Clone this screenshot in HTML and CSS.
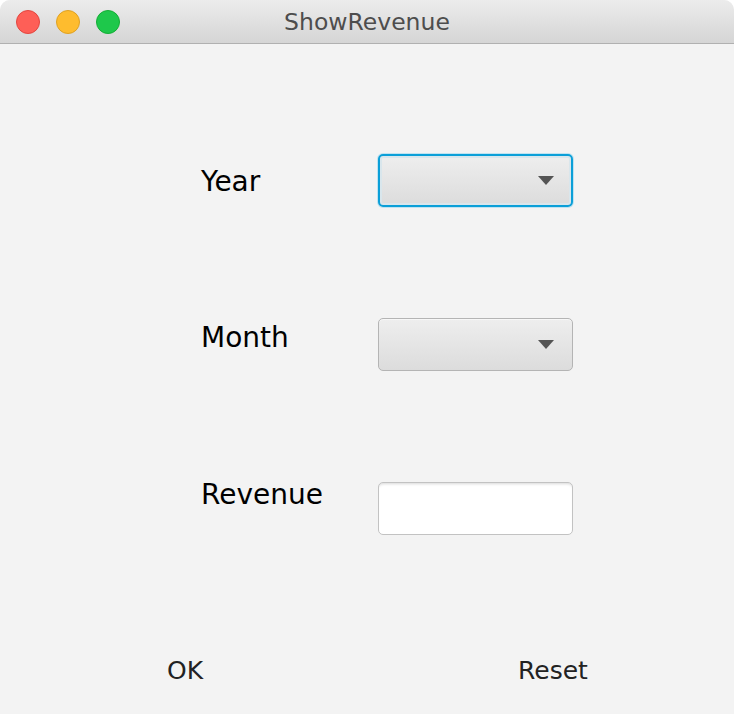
FILE: index.html
```html
<!DOCTYPE html>
<html>
<head>
<meta charset="utf-8">
<link rel="stylesheet" href="styles.css">
</head>
<body>
<div class="window">
  <div class="titlebar">
    <div class="lights">
      <span class="light red"></span>
      <span class="light yellow"></span>
      <span class="light green"></span>
    </div>
    <div class="title">ShowRevenue</div>
  </div>
  <div class="content">
    <div class="form">
      <div class="labels">
        <div class="label">Year</div>
        <div class="label">Month</div>
        <div class="label">Revenue</div>
      </div>
      <div class="controls">
        <div class="combo focused"><span class="arrow"></span></div>
        <div class="combo"><span class="arrow"></span></div>
        <div class="field"></div>
      </div>
    </div>
    <div class="buttons">
      <button class="btn ok">OK</button>
      <button class="btn reset">Reset</button>
    </div>
  </div>
</div>
</body>
</html>
```
FILE: styles.css
```css
html, body {
  margin: 0;
  padding: 0;
  background: #ffffff;
}
.window {
  width: 734px;
  height: 714px;
  display: flex;
  flex-direction: column;
  background: #f3f3f3;
  border-radius: 10px 10px 0 0;
  overflow: hidden;
  font-family: "DejaVu Sans", "Liberation Sans", sans-serif;
}
.titlebar {
  position: relative;
  height: 43px;
  flex: none;
  background: linear-gradient(#ececec, #d5d5d5);
  border-bottom: 1px solid #b0b0b0;
  display: flex;
  align-items: center;
  justify-content: center;
}
.lights {
  position: absolute;
  left: 16px;
  top: 10px;
  display: flex;
  gap: 16px;
}
.light {
  width: 22px;
  height: 22px;
  border-radius: 50%;
  box-sizing: content-box;
  display: block;
}
.red { background: #fe5f57; border: 1px solid #e2463f; }
.yellow { background: #febc2e; border: 1px solid #dea123; }
.green { background: #1ec84b; border: 1px solid #14ad35; }
.title {
  font-size: 23.5px;
  color: #4d4d4d;
  margin-top: 1px;
}
.content {
  flex: 1;
  display: flex;
  flex-direction: column;
  padding-top: 110px;
}
.form {
  display: flex;
  margin-left: 201px;
}
.labels {
  width: 177px;
  display: flex;
  flex-direction: column;
  gap: 116.5px;
  padding-top: 7.5px;
}
.label {
  font-size: 28px;
  line-height: 40px;
  height: 40px;
  color: #000;
}
.controls {
  width: 195px;
  display: flex;
  flex-direction: column;
  gap: 111px;
}
.combo {
  position: relative;
  height: 53px;
  box-sizing: border-box;
  border: 1px solid #b4b4b4;
  border-radius: 5px;
  background: linear-gradient(#eeeeee, #dcdcdc);
  box-shadow: inset 0 1px 0 #f7f7f7;
}
.combo.focused {
  border: 2px solid #0b9fd8;
  box-shadow: 0 0 0 1px #bfe3f1, inset 0 0 0 2px #d9e6ec;
}
.arrow {
  position: absolute;
  right: 18px;
  top: 21px;
  width: 0;
  height: 0;
  border-left: 8px solid transparent;
  border-right: 8px solid transparent;
  border-top: 9px solid #545454;
}
.combo.focused .arrow {
  right: 17px;
  top: 20px;
}
.field {
  height: 53px;
  box-sizing: border-box;
  border: 1px solid #c2c2c2;
  border-radius: 5px;
  background: #ffffff;
  box-shadow: inset 0 3px 3px -2px #d8d8d8;
}
.buttons {
  display: flex;
  justify-content: space-between;
  margin-top: 120px;
  padding: 0 131px 0 145px;
}
.btn {
  background: transparent;
  border: none;
  font-family: "DejaVu Sans", "Liberation Sans", sans-serif;
  font-size: 25px;
  color: #222222;
  padding: 0;
  height: 30px;
}
.btn.ok { width: 80px; }
.btn.reset { width: 100px; }
```
